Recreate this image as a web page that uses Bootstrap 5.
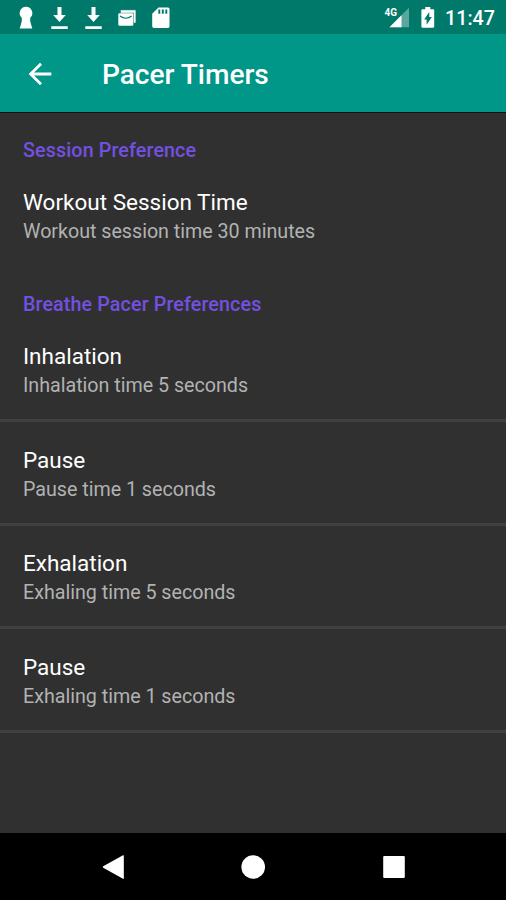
<!DOCTYPE html>
<html lang="en">
<head>
<meta charset="utf-8">
<meta name="viewport" content="width=device-width, initial-scale=1">
<title>Pacer Timers</title>
<link href="https://cdn.jsdelivr.net/npm/bootstrap@5.3.0/dist/css/bootstrap.min.css" rel="stylesheet">
<style>
  body { font-family: Roboto, sans-serif; background: #303030; color: #fff; overflow: hidden; }
  svg { display: block; flex: none; }
  .status-bar { height: 34px; background: #00796b; padding: 1px 11px 0 18px; }
  .status-left { gap: 16px; }
  .status-time { font-size: 19.7px; font-weight: 500; line-height: 32px; padding-top: 2px; }
  .app-bar { height: 79px; background: #009688; border-bottom: 1px solid #101010; padding: 1px 23px 0; }
  .app-title { font-size: 28.1px; font-weight: 500; line-height: 34px; margin-left: 45px; padding-top: 3px; letter-spacing: -.03px; }
  .pref-category { font-size: 19.7px; font-weight: 500; line-height: 26px; letter-spacing: .12px; color: #7350e0; padding: 25px 23px .3px; }
  .pref-row { height: 103.6px; padding: 23.8px 23px 0; border-bottom: 3px solid #3f3f3f; }
  .pref-row.last-in-group { height: 102.8px; border-bottom: 0; }
  .pref-title { font-size: 22.5px; line-height: 28.8px; font-weight: 400; }
  .pref-summary { font-size: 19.7px; line-height: 28.8px; letter-spacing: -.02px; padding-top: 1px; color: #b2b2b2; }
  .nav-buttons { height: 67px; background: #000; padding: 0 100.5px; }
</style>
</head>
<body>
<div class="vh-100 d-flex flex-column">
  <div class="status-bar d-flex align-items-center justify-content-between">
    <div class="status-left d-flex align-items-center">
      <svg width="16" height="24" viewBox="0 0 16 24" fill="#fff"><path d="M8 .7a6.300 6.300 0 0 1 4.300 10.900Q12 14 12.400 16L14.300 22.500H1.700L3.600 16Q4 14 3.700 11.600A6.300 6.300 0 0 1 8 .7z"/></svg>
      <svg width="18" height="24" viewBox="0 0 18 24" fill="#fff"><path d="M7.500 1h4v8h4.300L9.500 16 3.200 9h4.300zM1.300 20.300h16.400v2.700H1.300z"/></svg>
      <svg width="18" height="24" viewBox="0 0 18 24" fill="#fff"><path d="M7.500 1h4v8h4.300L9.500 16 3.200 9h4.300zM1.300 20.300h16.400v2.700H1.300z"/></svg>
      <svg width="18" height="24" viewBox="0 0 18 24"><path d="M3 5V4.400h14.300v12H16V6.500H3z" fill="#fff" stroke="#fff" stroke-width=".6"/><rect x=".3" y="7.300" width="15" height="12.500" rx="1.200" fill="#fff"/><path d="M2 10q5.800 4.500 11.600 0" fill="none" stroke="#00796b" stroke-width="1.200"/></svg>
      <svg width="18" height="24" viewBox="0 0 18 24"><path d="M6.500 1.500H16a1.800 1.800 0 0 1 1.500 1.800v16.900A1.800 1.800 0 0 1 16 22H2a1.800 1.800 0 0 1-1.800-1.800V7.800z" fill="#fff"/><path d="M7.300 3.500v4.200M10.800 3.500v4.200M14.300 3.500v4.200" stroke="#00796b" stroke-width="1.900"/></svg>
    </div>
    <div class="d-flex align-items-center">
      <svg width="28" height="26" viewBox="0 0 28 26"><path d="M8.500 22.200 28 2.700v19.500z" fill="#fff" opacity=".35"/><path d="M8.500 22.200 20.500 10.200v12z" fill="#fff"/><text x="3.500" y="11" font-family="Roboto, sans-serif" font-size="11" font-weight="700" fill="#fff" textLength="12.500" lengthAdjust="spacingAndGlyphs">4G</text></svg>
      <svg class="ms-2 me-2" width="20" height="26" viewBox="0 0 20 26"><path d="M8.300 2h5v2.300H16c.7 0 1.200.5 1.200 1.200v16c0 .7-.5 1.200-1.200 1.200H5.600c-.7 0-1.200-.5-1.200-1.200v-16c0-.7.5-1.200 1.200-1.200h2.700z" fill="#fff"/><path d="M12.300 7v5h2.600L9.600 19.800v-5.300H7.100z" fill="#00796b"/></svg>
      <span class="status-time">11:47</span>
    </div>
  </div>

  <header class="app-bar d-flex align-items-center">
    <svg width="34" height="34" viewBox="0 0 24 24" fill="#fff"><path d="M20 11H7.830l5.590-5.590L12 4l-8 8 8 8 1.410-1.410L7.830 13H20v-2z"/></svg>
    <h1 class="app-title mb-0">Pacer Timers</h1>
  </header>

  <main class="flex-grow-1 overflow-hidden">
    <div class="pref-category">Session Preference</div>
    <div class="pref-row last-in-group">
      <div class="pref-title">Workout Session Time</div>
      <div class="pref-summary">Workout session time 30 minutes</div>
    </div>
    <div class="pref-category">Breathe Pacer Preferences</div>
    <div class="pref-row">
      <div class="pref-title">Inhalation</div>
      <div class="pref-summary">Inhalation time 5 seconds</div>
    </div>
    <div class="pref-row">
      <div class="pref-title">Pause</div>
      <div class="pref-summary">Pause time 1 seconds</div>
    </div>
    <div class="pref-row">
      <div class="pref-title">Exhalation</div>
      <div class="pref-summary">Exhaling time 5 seconds</div>
    </div>
    <div class="pref-row">
      <div class="pref-title">Pause</div>
      <div class="pref-summary">Exhaling time 1 seconds</div>
    </div>
  </main>

  <footer class="nav-buttons d-flex align-items-center justify-content-between">
    <svg width="24" height="26" viewBox="0 0 24 26" fill="#fff"><path d="M22 1.200q.8-.3.800.6v22.400q0 .9-.8.600L2.200 13.700q-1-.7 0-1.400z"/></svg>
    <svg width="24" height="24" viewBox="0 0 24 24" fill="#fff"><circle cx="12.200" cy="12" r="11.800"/></svg>
    <svg width="24" height="24" viewBox="0 0 24 24" fill="#fff"><rect x="1.200" y="1" width="21.600" height="22" rx="1"/></svg>
  </footer>
</div>
<script src="https://cdn.jsdelivr.net/npm/bootstrap@5.3.0/dist/js/bootstrap.bundle.min.js"></script>
</body>
</html>
